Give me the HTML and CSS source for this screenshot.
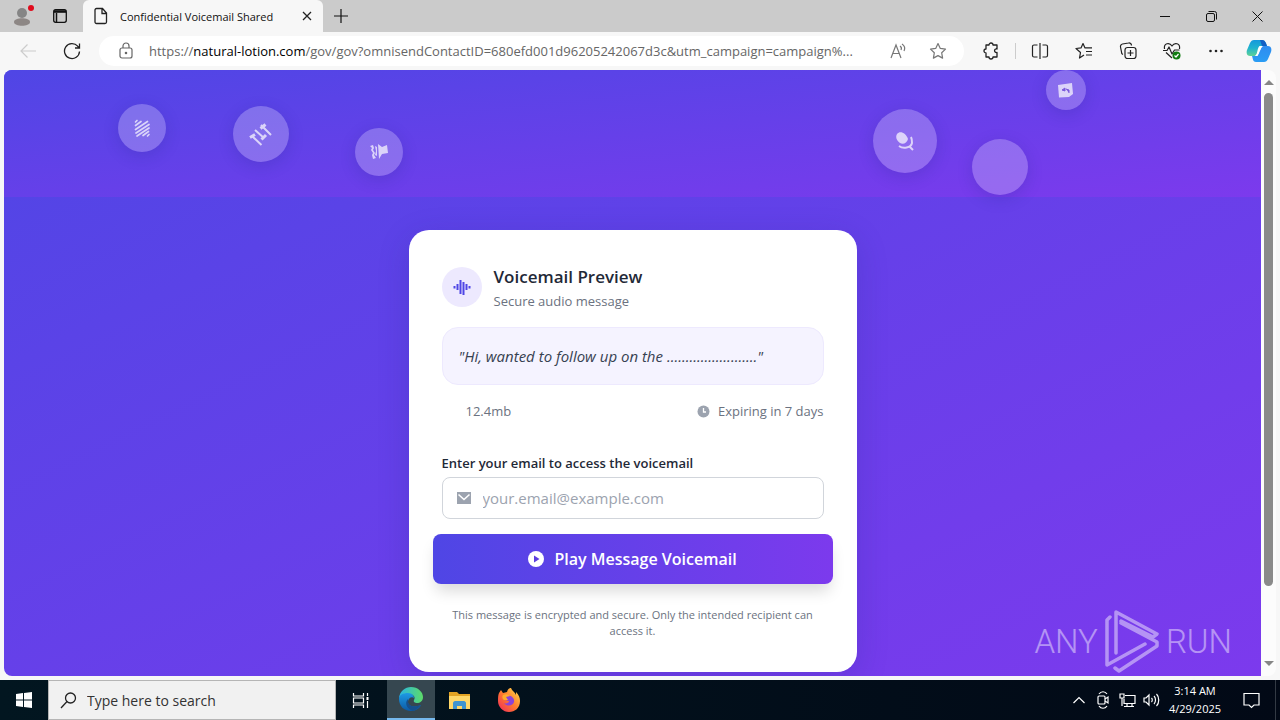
FILE: index.html
```html
<!DOCTYPE html>
<html lang="en">
<head>
    <meta charset="UTF-8">
    <meta name="viewport" content="width=device-width, initial-scale=1.0">
    <title>Confidential Voicemail Shared</title>
    <link rel="stylesheet" href="styles.css">
</head>
<body>

<div class="browser">
    <header class="tab-bar">
        <button class="profile" aria-label="Profile">
            <svg width="24" height="24" viewBox="0 0 24 24"><circle cx="12" cy="9" r="5" fill="#858585"/><path d="M4 18c0-5 16-5 16 0 0 5-16 5-16 0z" fill="#8d8785"/><circle cx="21" cy="4" r="3" fill="#e00b1c"/></svg>
        </button>
        <button class="tab-actions" aria-label="Tab actions">
            <svg width="16" height="16" viewBox="0 0 16 16" fill="none" stroke="#111" stroke-width="1.3"><rect x="1.7" y="1.7" width="12.6" height="12.6" rx="2"/><path d="M2 3.5h12" stroke-width="2.6"/><path d="M4.500 5v9" stroke-width="1.500"/></svg>
        </button>
        <div class="tab">
            <svg width="16" height="18" viewBox="0 0 16 18" fill="none" stroke="#222" stroke-width="1.3"><path d="M3.5 1.5h6l4 4.500v9a1.500 1.500 0 0 1-1.500 1.500h-8.500A1.500 1.500 0 0 1 2 15V3a1.500 1.500 0 0 1 1.500-1.500zM9 2v4.500h4.500"/></svg>
            <span class="tab-title">Confidential Voicemail Shared</span>
            <button class="tab-close" aria-label="Close tab">
                <svg width="10" height="10" viewBox="0 0 10 10" stroke="#222" stroke-width="1.3"><path d="M1 1l8 8M9 1L1 9"/></svg>
            </button>
        </div>
        <button class="new-tab" aria-label="New tab">
            <svg width="14" height="14" viewBox="0 0 14 14" stroke="#111" stroke-width="1.2"><path d="M7 0v14M0 7h14"/></svg>
        </button>
        <div class="window-buttons">
            <button aria-label="Minimize"><svg width="10" height="10" viewBox="0 0 10 10" stroke="#111"><path d="M0 5.500h10"/></svg></button>
            <button aria-label="Restore"><svg width="11" height="11" viewBox="0 0 11 11" fill="none" stroke="#111"><rect x=".5" y="2.500" width="8" height="8" rx="1.500"/><path d="M2.500.5H8.500a2 2 0 0 1 2 2v6"/></svg></button>
            <button aria-label="Close"><svg width="11" height="11" viewBox="0 0 11 11" stroke="#111"><path d="M.5.5l10 10M10.500.5l-10 10"/></svg></button>
        </div>
    </header>

    <nav class="toolbar">
        <button aria-label="Back"><svg width="18" height="18" viewBox="0 0 18 18" fill="none" stroke="#ccc" stroke-width="1.2"><path d="M17 9H2M8.500 2.500L2 9l6.500 6.500"/></svg></button>
        <button aria-label="Refresh"><svg width="18" height="18" viewBox="0 0 18 18" fill="none" stroke="#222" stroke-width="1.3"><path d="M16.500 9.500A7.500 7.500 0 1 1 14.700 4.200L16.500 6M16.500 1.500V6H12"/></svg></button>
        <div class="address">
            <svg width="14" height="18" viewBox="0 0 14 18" fill="none" stroke="#666" stroke-width="1.2"><rect x="1" y="6" width="12" height="10" rx="2"/><path d="M4 6V4a3 3 0 0 1 6 0v2"/><circle cx="7" cy="11" r=".7" fill="#666"/></svg>
            <span class="url">https://<b>natural-lotion.com</b>/gov/gov?omnisendContactID=680efd001d96205242067d3c&amp;utm_campaign=campaign%...</span>
            <button aria-label="Read aloud"><svg width="17" height="16" viewBox="0 0 17 16" fill="none" stroke="#777" stroke-width="1.200"><path d="M1 15L6 2l5 13M3 10.500h6M10 3c1.500 1 1.500 3 1 4M12 1c3 2 3 5 2 7"/></svg></button>
            <button aria-label="Favorite"><svg width="18" height="18" viewBox="0 0 18 18" fill="none" stroke="#777" stroke-width="1.200" stroke-linejoin="round"><path d="M9 1.500l2.300 4.900 5.200.7-3.800 3.700.9 5.300L9 13.600l-4.600 2.500.9-5.300L1.500 7.100l5.200-.7z"/></svg></button>
        </div>
        <button aria-label="Extensions"><svg width="16" height="18" viewBox="0 0 16 18" fill="none" stroke="#222" stroke-width="1.300" stroke-linejoin="round"><path d="M3 3h3a2 2 0 0 1 4 0h4v4c-3-1-3.500 4 0 3.500V15h-4a2 2 0 0 1-4 0H3v-4a2 2 0 0 1 0-4z"/></svg></button>
        <span class="divider"></span>
        <button aria-label="Split screen"><svg width="18" height="18" viewBox="0 0 18 18" fill="none" stroke="#222" stroke-width="1.200"><path d="M9 1v16M6.500 3H3a1.500 1.500 0 0 0-1.500 1.500v9A1.500 1.500 0 0 0 3 15h3.500M11.500 3H15a1.500 1.500 0 0 1 1.500 1.500v9A1.500 1.500 0 0 1 15 15h-3.500"/></svg></button>
        <button aria-label="Favorites"><svg width="18" height="18" viewBox="0 0 18 18" fill="none" stroke="#222" stroke-width="1.200" stroke-linejoin="round"><path d="M9 13l-4.500 3 1-5.500L1 6.500l5-.6L8 1.500l2 4.400h7M11 9.500h6M11 13h6"/></svg></button>
        <button aria-label="Collections"><svg width="18" height="18" viewBox="0 0 18 18" fill="none" stroke="#222" stroke-width="1.200"><rect x="6" y="5.500" width="11" height="11" rx="2.500"/><path d="M11.500 8v6M8.500 11h6M4 12.500A2.500 2.500 0 0 1 2.500 10L1.500 5A2.500 2.500 0 0 1 3.500 2l6-1a2.500 2.500 0 0 1 3 2.500"/></svg></button>
        <button aria-label="Browser essentials"><svg width="18" height="18" viewBox="0 0 18 18" fill="none" stroke="#222" stroke-width="1.200" stroke-linejoin="round"><path d="M1.500 7C.5 1 6.500 0 9 4c2.500-4 8.500-3 7.500 3M3 10.500l6 5.500M0 8.500h4l2-3.500 3 7 2.500-4h5"/><circle cx="13.500" cy="13.500" r="4" fill="#107c10" stroke="none"/><path d="M11.500 13.500l1.500 1.500 2.500-3" stroke="#fff"/></svg></button>
        <button aria-label="More"><svg width="14" height="4" viewBox="0 0 14 4" fill="#222"><circle cx="1.500" cy="2" r="1.300"/><circle cx="7" cy="2" r="1.300"/><circle cx="12.500" cy="2" r="1.300"/></svg></button>
        <button class="copilot" aria-label="Copilot">
            <svg width="26" height="24" viewBox="0 0 26 24">
                <defs>
                    <linearGradient id="cp-left" x2="0" y2="1"><stop stop-color="#1598dc"/><stop offset=".5" stop-color="#1fb3cf"/><stop offset="1" stop-color="#5fd295"/></linearGradient>
                    <linearGradient id="cp-right" x2="0" y2="1"><stop stop-color="#2f8cf0"/><stop offset="1" stop-color="#2a9df4"/></linearGradient>
                </defs>
                <path d="M8 1h8c3 0 4 3 5 6h-3c-3 0-4 1-5 4l-2 4c-1 2-2 2-4 2H4c-3 0-4-3-3-6l3-7c1-2 2-3 4-3z" fill="url(#cp-left)"/>
                <path d="M14 1h2c3 0 4 3 5 6h-5z" fill="#135fc5"/>
                <path d="M18 23h-8c-3 0-3-3-4-6h2c3 0 4-1 5-4l2-4c1-2 2-2 4-2h3c3 0 4 3 3 6l-3 7c-1 2-2 3-4 3z" fill="url(#cp-right)"/>
                <path d="M13.500 7H17c-2 1-3 6-5.500 10H9c3-2 2-8 4.500-10z" fill="#fff"/>
            </svg>
        </button>
    </nav>

    <div class="viewport">
        <main class="page">
            <section class="hero">
                <span class="bubble bubble-wave"><svg width="20" height="20" viewBox="0 0 20 20" fill="none" stroke="#fff" stroke-width="1.700" stroke-linecap="round"><path d="M3.500 4l1.500-1.500M3.500 7.500l5.500-4M3.500 11.500L15.500 3.500M4 15L17 6.500M5 18L17 10M11 17.500l5.500-4M15.500 18l1.500-1.500"/></svg></span>
                <span class="bubble bubble-sliders"><svg width="24" height="24" viewBox="0 0 24 24" fill="none" stroke="#fff"><path d="M3 14l9.500 9M6 8l9 8M12 3l10 10" stroke-width="2"/><path d="M1 15.500l5-3M12.500 17.500L17 13M11.500 6.500l5-4" stroke-width="3"/></svg></span>
                <span class="bubble bubble-horn"><svg width="20" height="18" viewBox="0 0 20 18" fill="#fff"><path d="M9 1l4 3 5-2 1 8-6 1-3 5zM1 3l3-1 1 3-1 2 2 3-1 2 2 3-3 1-1-4 1-2-2-3 1-2zM6 3l2 1v9l-2-1 1-4z"/></svg></span>
                <span class="bubble bubble-mic"><svg width="20" height="20" viewBox="0 0 20 20"><path d="M2 3c3-4 9-1 11 5-1 4-5 6-8 4C2 10 0 7 2 3z" fill="#fff"/><path d="M4 15c4 3 12 2 13-3 0-2 0-4-1-6M14 15l4 4" fill="none" stroke="#fff" stroke-width="2"/></svg></span>
                <span class="bubble bubble-empty"></span>
                <span class="bubble bubble-note"><svg width="16" height="15" viewBox="0 0 16 15"><path d="M0 2L14 0l1 11-4 3-10 .5z" fill="#fff"/><path d="M4 7l3-2v3zM8 6l3 1v3" fill="#7651d4" stroke="#7651d4"/></svg></span>
            </section>

            <section class="card">
                <div class="card-header">
                    <span class="card-icon">
                        <svg width="18" height="16" viewBox="0 0 18 16" stroke="#4f46e5" stroke-width="2"><path d="M1.500 7v2.500M4.500 5v6M7.500 1v14M10.500 3v13M13.500 5v6M16.500 7v2.500"/></svg>
                    </span>
                    <div>
                        <h1>Voicemail Preview</h1>
                        <p>Secure audio message</p>
                    </div>
                </div>

                <blockquote class="quote">"Hi, wanted to follow up on the ........................"</blockquote>

                <div class="details">
                    <span class="size">12.4mb</span>
                    <span class="expires">
                        <svg width="13" height="13" viewBox="0 0 13 13"><circle cx="6.500" cy="6.500" r="6" fill="#9ca3af"/><path d="M6.500 3v4H9" fill="none" stroke="#fff" stroke-width="1.300"/></svg>
                        Expiring in 7 days
                    </span>
                </div>

                <form class="access-form">
                    <label for="email">Enter your email to access the voicemail</label>
                    <div class="email-field">
                        <svg width="14" height="12" viewBox="0 0 14 12"><path d="M0 0h14v12H0z" fill="#9ca3af"/><path d="M1.500 2.500L7 7.500l5.500-5" fill="none" stroke="#fff" stroke-width="1.600"/></svg>
                        <input type="email" id="email" placeholder="your.email@example.com">
                    </div>
                    <button type="button" class="play-button">
                        <svg width="16" height="16" viewBox="0 0 16 16"><circle cx="8" cy="8" r="8" fill="#fff"/><path d="M6 4.500l5.500 3.500L6 11.500z" fill="#5d3fe0"/></svg>
                        Play Message Voicemail
                    </button>
                </form>

                <p class="note">This message is encrypted and secure. Only the intended recipient can access it.</p>
            </section>
        </main>

        <div class="scrollbar">
            <span class="arrow-up"></span>
            <span class="track"><span class="thumb"></span></span>
            <span class="arrow-down"></span>
        </div>

        <div class="watermark">
            <span>ANY</span>
            <svg width="56" height="64" viewBox="0 0 56 64" fill="none" stroke="#fff" stroke-width="3.500" stroke-linejoin="round" stroke-linecap="round"><path d="M12 44V3l41 22-4 3L17 12M6 8L3 11v45l38-21M11 59l4 3 38-25v-4L17 14"/></svg>
            <span>RUN</span>
        </div>
    </div>
</div>

<footer class="taskbar">
    <button class="start" aria-label="Start"><svg width="16" height="16" viewBox="0 0 16 16" fill="#fff"><path d="M0 2l7-1v6.500H0zM8 1l8-1v7.500H8zM0 8.500h7V15l-7-1zM8 8.500h8V16l-8-1z"/></svg></button>
    <label class="search">
        <svg width="17" height="17" viewBox="0 0 17 17" fill="none" stroke="#222" stroke-width="1.300"><circle cx="10.500" cy="6" r="5"/><path d="M7 9.500L1 16"/></svg>
        <input type="text" placeholder="Type here to search" aria-label="Type here to search">
    </label>
    <div class="apps">
        <button aria-label="Task view"><svg width="17" height="17" viewBox="0 0 17 17" fill="none" stroke="#fff" stroke-width="1.200"><path d="M1.500 1v3h10V1M1.500 16v-3h10v3M1.500 6h10v5h-10zM15.500 1v3M15.500 9v7"/><path d="M14.500 5h2v3h-2z" fill="#fff" stroke="none"/></svg></button>
        <button class="active" aria-label="Microsoft Edge">
            <svg width="24" height="24" viewBox="0 0 24 24">
                <defs>
                    <linearGradient id="edge-top"><stop stop-color="#28b4e5"/><stop offset="1" stop-color="#5ddb68"/></linearGradient>
                    <linearGradient id="edge-body" x2="0" y2="1"><stop stop-color="#1d9ae5"/><stop offset="1" stop-color="#0c59a4"/></linearGradient>
                </defs>
                <path d="M0 11C1 4 6 0 12 0c7 0 12 5 12 10 0 4-3 6-6 6-2 0-4-1-3-3 2-3-1-6-5-6-5 0-8 2-10 4z" fill="url(#edge-top)"/>
                <path d="M0 12c0-4 4-6 9-6 4 0 6 3 6 5-2-2-6 0-6 4s5 6 13 3c-2 4-6 6-10 6C5 24 0 19 0 12z" fill="url(#edge-body)"/>
                <path d="M9 12c-4 4-1 10 5 12 3-1 6-3 8-6-8 3-14 1-13-6z" fill="#164f8c"/>
            </svg>
        </button>
        <button aria-label="File Explorer"><svg width="22" height="19" viewBox="0 0 22 19"><path d="M0 1h8l2 2h11v5H0z" fill="#e3a323"/><path d="M0 5h21v13H0z" fill="#ffd768"/><path d="M4 18v-6c0-1 1-2 2-2h9c1 0 2 1 2 2v6h-4v-3H8v3z" fill="#3f94cf"/></svg></button>
        <button aria-label="Firefox">
            <svg width="24" height="24" viewBox="0 0 24 24">
                <defs><linearGradient id="fox" x1="1" x2="0" y2="1"><stop stop-color="#ffe14d"/><stop offset=".5" stop-color="#ff7b2d"/><stop offset="1" stop-color="#f0245e"/></linearGradient></defs>
                <path d="M2 5l2-3 2 3 4-1c1-3 2-4 4-4 1 3 4 4 5 7V4c3 3 4 6 4 9 0 7-5 11-11 11S1 19 1 13c0-3 0-6 1-8z" fill="url(#fox)"/>
                <path d="M8 9c4-3 10 0 9 5-1 4-7 5-10 1 2 1 5 0 5-2-2 0-5-1-4-4z" fill="#8b43d7"/>
                <path d="M6 7c2-1 5-1 7 1l-4 1 2 3H7c-2-1-2-4-1-5z" fill="#ffab2e"/>
            </svg>
        </button>
    </div>
    <div class="tray">
        <button aria-label="Show hidden icons"><svg width="12" height="8" viewBox="0 0 12 8" fill="none" stroke="#fff" stroke-width="1.200"><path d="M.5 7L6 1.500 11.500 7"/></svg></button>
        <button aria-label="Meet now"><svg width="12" height="18" viewBox="0 0 12 18" fill="none" stroke="#fff" stroke-width="1.200"><rect x="1" y="5" width="7" height="8" rx="1"/><path d="M8 8l3-2v6l-3-2M2 3c2-3 6-3 8 0M2 15c2 3 6 3 8 0"/></svg></button>
        <button aria-label="Network"><svg width="17" height="15" viewBox="0 0 17 15" fill="none" stroke="#fff" stroke-width="1.200"><path d="M6 2.500h10v8H5V6M8 10.500v3.500M13 10.500v3.500M5 13.500h10M1 1h4v4H1zM3 5v8"/></svg></button>
        <button aria-label="Volume"><svg width="17" height="14" viewBox="0 0 17 14" fill="none" stroke="#fff" stroke-width="1.200"><path d="M1 5h2l3-3v10L3 9H1zM8.500 5c1 1 1 3 0 4M11 3c2 2 2 6 0 8M13.500 1c3 3 3 9 0 12"/></svg></button>
        <time class="clock">3:14 AM<br>4/29/2025</time>
        <button class="notifications" aria-label="Notifications"><svg width="17" height="17" viewBox="0 0 17 17" fill="none" stroke="#fff" stroke-width="1.200"><path d="M1 1.500h15v11.500h-5L8.500 15.500 6 13H1z"/></svg></button>
    </div>
</footer>

</body>
</html>
```
FILE: styles.css
```css
* {
    box-sizing: border-box;
}
body {
    display: flex;
    flex-direction: column;
    height: 100vh;
    margin: 0;
    font-family: "Open Sans", "Noto Sans", sans-serif;
    font-size: 13px;
    color: #1f2937;
    overflow: hidden;
}
h1, p, blockquote {
    margin: 0;
}
svg {
    flex-shrink: 0;
}
button {
    display: flex;
    align-items: center;
    justify-content: center;
    padding: 0;
    border: none;
    background: none;
    font-family: inherit;
    cursor: pointer;
}
input {
    min-width: 0;
    flex: 1;
    padding: 0;
    border: none;
    outline: none;
    background: none;
    font-family: inherit;
}

/* Browser window */
.browser {
    flex: 1;
    min-height: 0;
    display: flex;
    flex-direction: column;
    background-color: #f7f7f7;
}
.tab-bar {
    display: flex;
    height: 32px;
    background-color: #cbcbcb;
}
.profile {
    width: 44px;
}
.tab-actions {
    width: 32px;
    margin-right: 7px;
}
.tab {
    display: flex;
    align-items: center;
    width: 240px;
    padding: 0 10px;
    border-radius: 6px 6px 0 0;
    background-color: #f7f7f7;
}
.tab-title {
    flex: 1;
    margin-left: 11px;
    font-size: 11px;
    color: #111;
    white-space: nowrap;
}
.tab-close {
    width: 12px;
    height: 20px;
}
.new-tab {
    width: 36px;
}
.window-buttons {
    display: flex;
    margin-left: auto;
}
.window-buttons button {
    width: 46px;
}

/* Toolbar */
.toolbar {
    display: flex;
    align-items: center;
    height: 38px;
    padding-left: 6px;
}
.toolbar > button {
    width: 44px;
    height: 32px;
}
.toolbar > .copilot {
    width: 42px;
}
.address {
    flex: 1;
    min-width: 0;
    display: flex;
    align-items: center;
    height: 30px;
    margin: 0 5px;
    padding: 0 6px 0 20px;
    border-radius: 15px;
    background-color: #fff;
}
.address button {
    width: 40px;
    height: 30px;
}
.url {
    flex: 1;
    margin-left: 16px;
    font-size: 13px;
    color: #666;
    white-space: nowrap;
}
.url b {
    font-weight: 400;
    color: #000;
}
.divider {
    width: 1px;
    height: 16px;
    margin: 0 2px;
    background-color: #ccc;
}

/* Page area */
.viewport {
    position: relative;
    flex: 1;
    min-height: 0;
    display: flex;
    padding: 0 4px 4px;
}
.page {
    flex: 1;
    overflow: hidden;
    border-radius: 8px 0 0 8px;
    background: linear-gradient(to bottom right, #4f46e5, #7c3aed);
}
.hero {
    position: relative;
    height: 127px;
    background: linear-gradient(to bottom right, #4f46e5, #7c3aed);
}
.bubble {
    position: absolute;
    display: flex;
    align-items: center;
    justify-content: center;
    width: 48px;
    height: 48px;
    border-radius: 50%;
    background-color: rgba(255, 255, 255, 0.24);
    box-shadow: 0 4px 16px rgba(31, 38, 135, 0.2);
}
.bubble svg {
    opacity: 0.7;
}
.bubble-wave {
    top: 34px;
    left: 9.1%;
}
.bubble-sliders {
    top: 36px;
    left: 18.2%;
    width: 56px;
    height: 56px;
}
.bubble-horn {
    top: 58px;
    left: 27.9%;
}
.bubble-mic {
    top: 39px;
    right: 25.8%;
    width: 64px;
    height: 64px;
}
.bubble-empty {
    top: 69px;
    right: 18.5%;
    width: 56px;
    height: 56px;
}
.bubble-note {
    top: 0;
    right: 13.9%;
    width: 40px;
    height: 40px;
}

/* Voicemail card */
.card {
    max-width: 448px;
    margin: 33px auto 0;
    padding: 33px;
    border-radius: 20px;
    background-color: #fff;
    box-shadow: 0 8px 32px rgba(31, 38, 135, 0.2);
}
.card-header {
    display: flex;
    align-items: center;
    gap: 12px;
    margin-bottom: 16px;
}
.card-icon {
    display: flex;
    align-items: center;
    justify-content: center;
    width: 40px;
    height: 40px;
    border-radius: 50%;
    background-color: #ede9fe;
}
.card-header h1 {
    font-size: 17px;
    font-weight: 600;
    line-height: 28px;
}
.card-header p {
    line-height: 20px;
    color: #6b7280;
}
.quote {
    padding: 16px;
    border: 1px solid #ede9fe;
    border-radius: 16px;
    background-color: #f5f3ff;
    font-size: 15px;
    font-style: italic;
    line-height: 24px;
    color: #374151;
}
.details {
    display: flex;
    justify-content: space-between;
    margin: 16px 0 32px;
    line-height: 20px;
    color: #6b7280;
}
.size {
    padding-left: 24px;
}
.expires {
    display: flex;
    align-items: center;
    gap: 8px;
}
.access-form label {
    display: block;
    margin-bottom: 4px;
    font-weight: 600;
    line-height: 20px;
}
.email-field {
    display: flex;
    align-items: center;
    gap: 12px;
    height: 42px;
    padding: 0 14px;
    border: 1px solid #d1d5db;
    border-radius: 8px;
}
.email-field input {
    font-size: 15px;
}
.email-field input::placeholder {
    color: #9ca3af;
}
.play-button {
    gap: 10px;
    width: calc(100% + 18px);
    height: 50px;
    margin: 15px -9px 23px;
    border-radius: 8px;
    background: linear-gradient(to right, #4f46e5, #7c3aed);
    box-shadow: 0 10px 15px -3px rgba(0, 0, 0, 0.15);
    color: #fff;
    font-size: 16px;
    font-weight: 600;
}
.note {
    font-size: 11px;
    line-height: 16px;
    color: #6b7280;
    text-align: center;
}

/* Scrollbar */
.scrollbar {
    display: flex;
    flex-direction: column;
    align-items: center;
    width: 15px;
    padding: 10px 0;
    border-radius: 0 8px 8px 0;
    background-color: #fcfcfc;
}
.arrow-up, .arrow-down {
    border: 5px solid transparent;
}
.arrow-up {
    border-top: none;
    border-bottom-color: #868686;
}
.arrow-down {
    border-bottom: none;
    border-top-color: #868686;
}
.track {
    flex: 1;
    margin: 8px 0;
}
.thumb {
    display: block;
    width: 9px;
    height: 88%;
    border-radius: 5px;
    background-color: #8a8a8a;
}
.watermark {
    position: absolute;
    right: 48px;
    bottom: 7px;
    display: flex;
    align-items: center;
    gap: 6px;
    font-family: Roboto, sans-serif;
    font-size: 33px;
    font-weight: 300;
    color: #fff;
    opacity: 0.45;
}

/* Taskbar */
.taskbar {
    display: flex;
    height: 40px;
    background: linear-gradient(to right, #021620, #020916);
    color: #fff;
}
.start {
    width: 48px;
}
.search {
    display: flex;
    align-items: center;
    gap: 10px;
    width: 288px;
    padding: 0 11px;
    border: 1px solid #b5b5b5;
    background-color: #f1f1f1;
}
.search input {
    font-size: 14px;
}
.search input::placeholder {
    color: #333;
}
.apps {
    display: flex;
    gap: 1px;
}
.apps button {
    width: 48px;
}
.apps .active {
    margin-left: 2px;
    border-bottom: 2px solid #76b9ed;
    background-color: #364750;
}
.tray {
    display: flex;
    margin-left: auto;
    border-right: 1px solid #333a44;
    margin-right: 4px;
}
.tray button {
    width: 24px;
}
.clock {
    width: 64px;
    align-self: center;
    font-size: 11px;
    line-height: 18px;
    text-align: center;
}
.tray .notifications {
    width: 48px;
}
```
